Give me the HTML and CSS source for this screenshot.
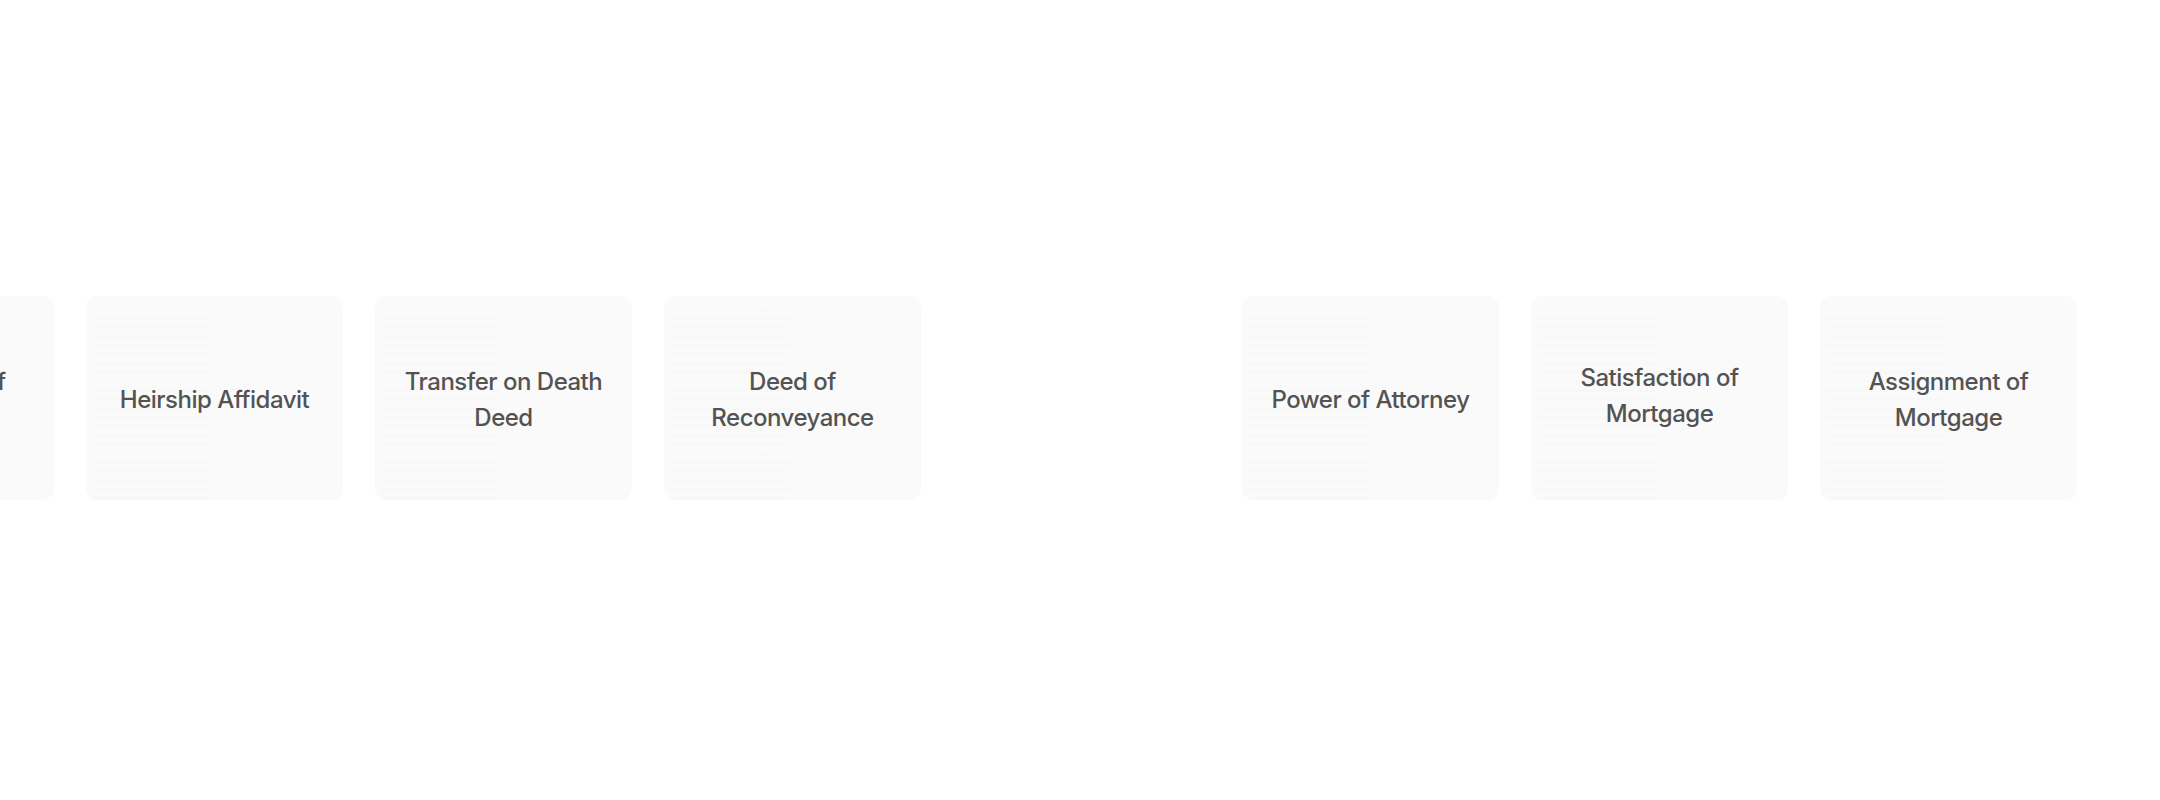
FILE: index.html
```html
<!DOCTYPE html>
<html lang="en">
<head>
    <meta charset="UTF-8">
    <meta name="viewport" content="width=device-width, initial-scale=1.0">
    <title>Document Types</title>
    <link rel="stylesheet" href="styles.css">
</head>
<body>
    <div class="carousel">
        <div class="track">
            <div class="doc-card"><span class="doc-title">Substitution of Trustee</span></div>
            <div class="doc-card"><span class="doc-title">Heirship Affidavit</span></div>
            <div class="doc-card"><span class="doc-title">Transfer on Death Deed</span></div>
            <div class="doc-card"><span class="doc-title">Deed of Reconveyance</span></div>
            <!-- image not loaded yet -->
            <div class="doc-card doc-card-empty"></div>
            <div class="doc-card"><span class="doc-title">Power of Attorney</span></div>
            <div class="doc-card"><span class="doc-title doc-title-up">Satisfaction of Mortgage</span></div>
            <div class="doc-card"><span class="doc-title">Assignment of Mortgage</span></div>
        </div>
    </div>
</body>
</html>
```

FILE: styles.css
```css
body {
    margin: 0;
    background: #ffffff;
    font-family: Inter, "Liberation Sans", Arial, sans-serif;
}
.carousel {
    overflow: hidden;
    padding-top: 296px;
    height: 504px;
}
.track {
    display: flex;
    gap: 32px;
    transform: translateX(-203px);
}
.doc-card {
    flex: 0 0 257px;
    height: 204px;
    box-sizing: border-box;
    padding: 4px 18px 0;
    border-radius: 12px;
    display: flex;
    align-items: center;
    justify-content: center;
    text-align: center;
    background-color: #fafafa;
    background-image:
        repeating-linear-gradient(to bottom, rgba(0,0,0,0.008) 0 3px, transparent 3px 9px);
    background-size: 120px 100%;
    background-position: 6px 12px;
    background-repeat: no-repeat;
}
.doc-card-empty {
    background: #ffffff;
}
.doc-title {
    color: #535353;
    font-size: 24px;
    font-weight: 450;
    line-height: 36px;
    letter-spacing: -0.5px;
}
.doc-title-up {
    margin-bottom: 8px;
}
```
